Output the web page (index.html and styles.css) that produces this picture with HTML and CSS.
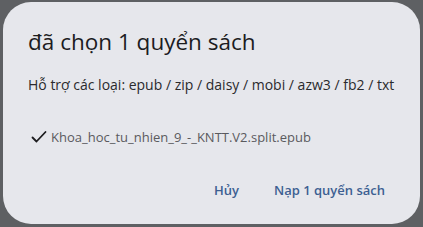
FILE: index.html
```html
<!DOCTYPE html>
<html lang="vi">
<head>
<meta charset="utf-8">
<link rel="stylesheet" href="styles.css">
</head>
<body>
<div class="dialog">
  <h1 class="title">đã chọn 1 quyển sách</h1>
  <p class="support">Hỗ trợ các loại: epub / zip / daisy / mobi / azw3 / fb2 / txt</p>
  <div class="file">
    <svg class="check" width="16" height="16" viewBox="0 0 16 16"><path d="M1.5 8.5 L5.5 12.5 L14.5 3" fill="none" stroke="#1c1c1e" stroke-width="1.8" stroke-linecap="round" stroke-linejoin="round"/></svg>
    <span class="name">Khoa_hoc_tu_nhien_9_-_KNTT.V2.split.epub</span>
  </div>
  <div class="actions">
    <button class="btn">Hủy</button>
    <button class="btn">Nạp 1 quyển sách</button>
  </div>
</div>
</body>
</html>
```
FILE: styles.css
```css
html, body {
  margin: 0;
  padding: 0;
  width: 423px;
  height: 227px;
  overflow: hidden;
  background: #5e6063;
  font-family: "Open Sans", "Noto Sans", sans-serif;
}
body {
  padding: 2px 3px 3px 3px;
  box-sizing: border-box;
}
.dialog {
  box-sizing: border-box;
  height: 222px;
  background: #e6e7ec;
  border-radius: 28px;
  padding: 24px 23px 0 25px;
  display: flex;
  flex-direction: column;
}
.title {
  margin: 0;
  font-size: 22.5px;
  font-weight: 400;
  line-height: 32px;
  color: #1c1c1f;
}
.support {
  margin: 17px 0 0 0;
  font-size: 14px;
  line-height: 20px;
  color: #2a2a2d;
}
.file {
  margin-top: 32px;
  display: flex;
  align-items: center;
  gap: 4px;
  padding-left: 3px;
}
.check { display: block; }
.name {
  font-size: 13px;
  line-height: 20px;
  color: #5a5a5e;
}
.actions {
  margin-top: 23px;
  display: flex;
  justify-content: flex-end;
  gap: 11px;
}
.btn {
  border: 0;
  background: transparent;
  font-family: inherit;
  font-size: 13px;
  font-weight: 600;
  color: #3d5f92;
  padding: 0 12px;
  height: 40px;
  line-height: 20px;
}
```
